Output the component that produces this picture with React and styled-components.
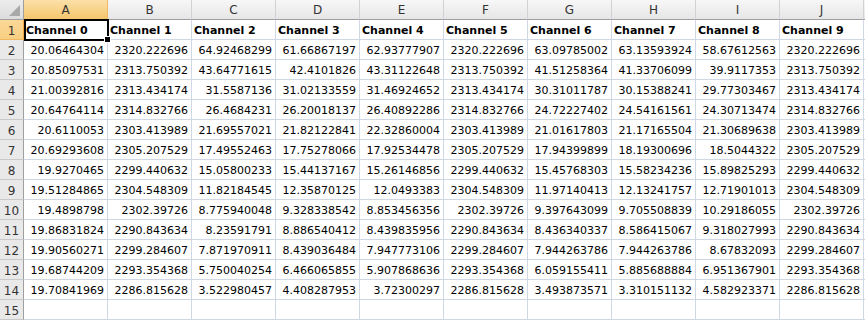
import styled, { createGlobalStyle, css } from "styled-components";

const GlobalStyle = createGlobalStyle`
    html, body {
        margin: 0;
        padding: 0;
        background: #ffffff;
        overflow: hidden;
    }
`;

const columns = ["A", "B", "C", "D", "E", "F", "G", "H", "I", "J"];

const rows = [
    ["20.06464304", "2320.222696", "64.92468299", "61.66867197", "62.93777907", "2320.222696", "63.09785002", "63.13593924", "58.67612563", "2320.222696"],
    ["20.85097531", "2313.750392", "43.64771615", "42.4101826", "43.31122648", "2313.750392", "41.51258364", "41.33706099", "39.9117353", "2313.750392"],
    ["21.00392816", "2313.434174", "31.5587136", "31.02133559", "31.46924652", "2313.434174", "30.31011787", "30.15388241", "29.77303467", "2313.434174"],
    ["20.64764114", "2314.832766", "26.4684231", "26.20018137", "26.40892286", "2314.832766", "24.72227402", "24.54161561", "24.30713474", "2314.832766"],
    ["20.6110053", "2303.413989", "21.69557021", "21.82122841", "22.32860004", "2303.413989", "21.01617803", "21.17165504", "21.30689638", "2303.413989"],
    ["20.69293608", "2305.207529", "17.49552463", "17.75278066", "17.92534478", "2305.207529", "17.94399899", "18.19300696", "18.5044322", "2305.207529"],
    ["19.9270465", "2299.440632", "15.05800233", "15.44137167", "15.26146856", "2299.440632", "15.45768303", "15.58234236", "15.89825293", "2299.440632"],
    ["19.51284865", "2304.548309", "11.82184545", "12.35870125", "12.0493383", "2304.548309", "11.97140413", "12.13241757", "12.71901013", "2304.548309"],
    ["19.4898798", "2302.39726", "8.775940048", "9.328338542", "8.853456356", "2302.39726", "9.397643099", "9.705508839", "10.29186055", "2302.39726"],
    ["19.86831824", "2290.843634", "8.23591791", "8.886540412", "8.439835956", "2290.843634", "8.436340337", "8.586415067", "9.318027993", "2290.843634"],
    ["19.90560271", "2299.284607", "7.871970911", "8.439036484", "7.947773106", "2299.284607", "7.944263786", "7.944263786", "8.67832093", "2299.284607"],
    ["19.68744209", "2293.354368", "5.750040254", "6.466065855", "5.907868636", "2293.354368", "6.059155411", "5.885688884", "6.951367901", "2293.354368"],
    ["19.70841969", "2286.815628", "3.522980457", "4.408287953", "3.72300297", "2286.815628", "3.493873571", "3.310151132", "4.582923371", "2286.815628"],
];

const Sheet = () => {
    return (
        <Grid>
            <Corner />
            {columns.map((letter, i) => (
                <ColHeader key={letter} selected={i === 0}>{letter}</ColHeader>
            ))}
            <Filler header />

            <RowHeader selected>1</RowHeader>
            {columns.map((letter, i) => (
                <Cell key={letter} bold active={i === 0}>
                    Channel {i}
                    {i === 0 && <FillHandle />}
                </Cell>
            ))}
            <Filler />

            {rows.map((values, r) => (
                <Row key={r} number={r + 2} values={values} />
            ))}

            <RowHeader>15</RowHeader>
            {columns.map(letter => (
                <Cell key={letter} />
            ))}
            <Filler />
        </Grid>
    );
}

const Row = ({ number, values }) => (
    <>
        <RowHeader>{number}</RowHeader>
        {values.map((v, i) => (
            <Cell key={i} numeric>{v}</Cell>
        ))}
        <Filler />
    </>
);

const App = () => (
    <>
        <GlobalStyle />
        <Sheet />
    </>
);

export default App;

const Grid = styled.div`
    display: grid;
    grid-template-columns: 24px repeat(10, 84px) 1fr;
    grid-auto-rows: 20px;
    width: 865px;
    height: 320px;
    font-family: "DejaVu Sans", Verdana, sans-serif;
    font-size: 11px;
    color: #000;
`;

// shared look of the grey column / row headings
const headerBase = css`
    box-sizing: border-box;
    display: flex;
    align-items: flex-end;
    justify-content: center;
    padding-bottom: 2px;
    color: #333;
    font-size: 12px;
    background: linear-gradient(#f7f7f7, #e6e6e6);
`;

const Corner = styled.div`
    box-sizing: border-box;
    position: relative;
    background: linear-gradient(#ececec, #dcdcdc);
    border-right: 1px solid #9f9f9f;
    border-bottom: 1px solid #9f9f9f;

    &::after {
        content: "";
        position: absolute;
        right: 3px;
        bottom: 3px;
        width: 0;
        height: 0;
        border-left: 11px solid transparent;
        border-bottom: 11px solid #a9a9a9;
    }
`;

const ColHeader = styled.div`
    ${headerBase};
    border-right: 1px solid #d2d2d2;
    border-bottom: 1px solid ${p => p.selected ? "#f2a541" : "#9f9f9f"};
    ${p => p.selected && css`
        background: linear-gradient(#fbe0a9, #f5c66c);
        border-right-color: #f2b860;
    `}
`;

const RowHeader = styled.div`
    ${headerBase};
    background: ${p => p.selected ? "linear-gradient(#fad896, #f7cf82)" : "#e9e9e9"};
    border-right: 1px solid ${p => p.selected ? "#f2a541" : "#9f9f9f"};
    border-bottom: 1px solid ${p => p.selected ? "#f2b860" : "#c9c9c9"};
    padding-bottom: 1px;
`;

const Cell = styled.div`
    box-sizing: border-box;
    position: relative;
    display: flex;
    align-items: flex-end;
    justify-content: ${p => p.numeric ? "flex-end" : "flex-start"};
    padding: 0 3px 2px 2px;
    border-right: 1px solid #d0d7e5;
    border-bottom: 1px solid #d0d7e5;
    white-space: nowrap;
    font-weight: ${p => p.bold ? 700 : 400};

    ${p => p.active && css`
        &::before {
            content: "";
            position: absolute;
            left: 0;
            top: -1px;
            right: -2px;
            bottom: -2px;
            border: 2px solid #000;
            pointer-events: none;
        }
    `}
`;

const FillHandle = styled.span`
    position: absolute;
    right: -4px;
    bottom: -4px;
    width: 5px;
    height: 5px;
    background: #000;
    border: 1px solid #fff;
    z-index: 2;
`;

const Filler = styled.div`
    box-sizing: border-box;
    border-bottom: 1px solid ${p => p.header ? "#9f9f9f" : "#d0d7e5"};
    background: ${p => p.header ? "linear-gradient(#f7f7f7, #e6e6e6)" : "#fff"};
`;
